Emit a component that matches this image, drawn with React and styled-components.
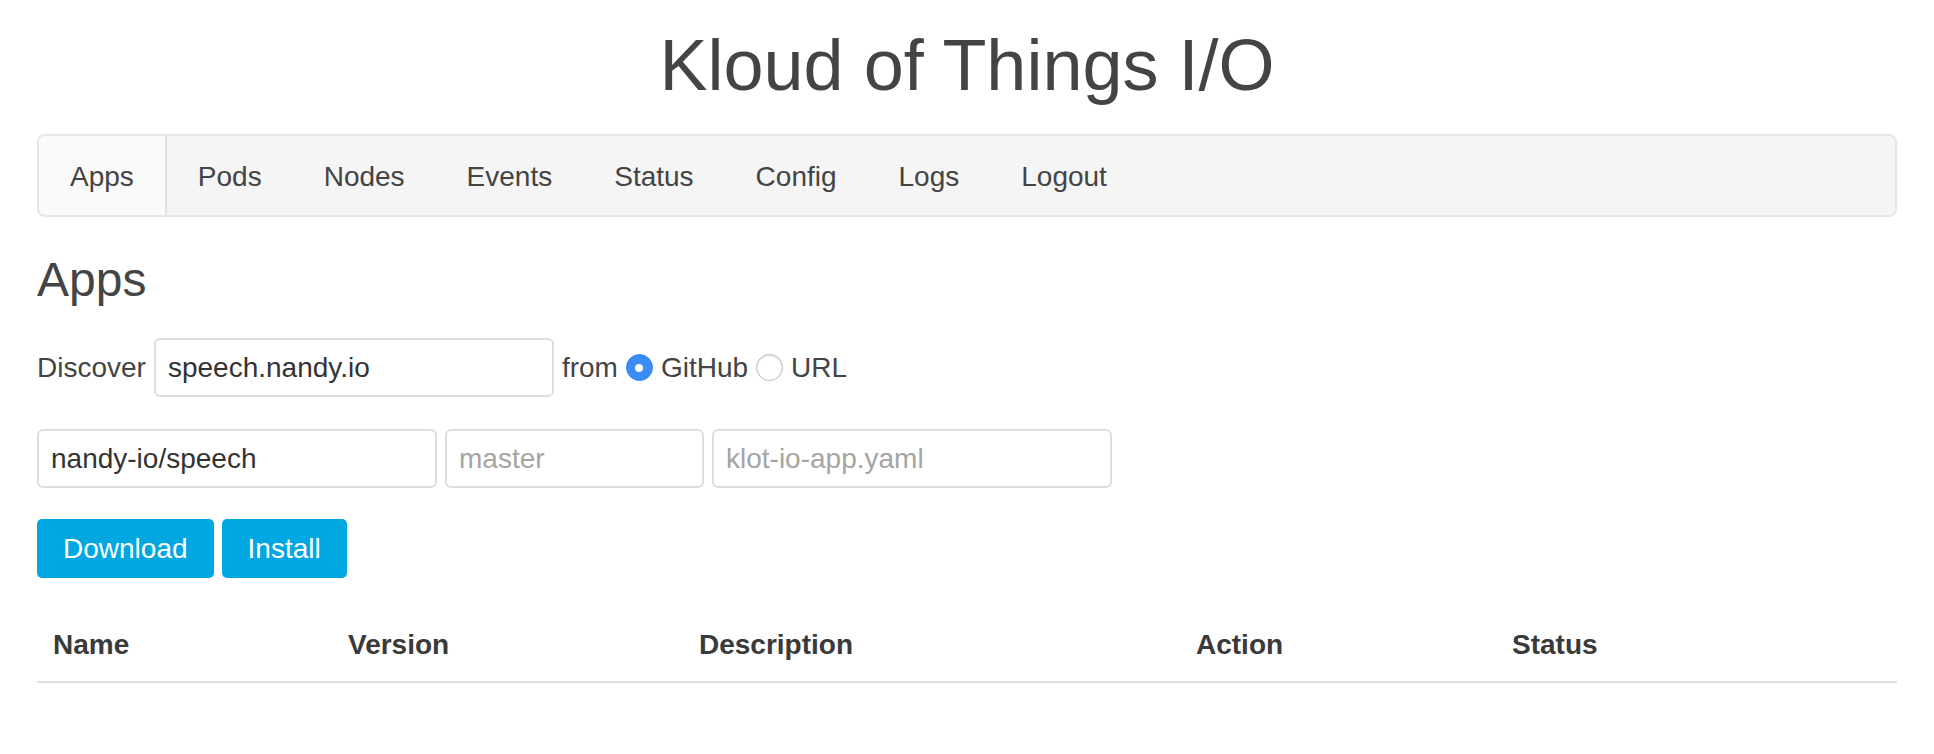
import React from 'react';
import styled, { createGlobalStyle } from 'styled-components';

const GlobalStyle = createGlobalStyle`
    body {
        margin: 0;
        background: #fff;
        color: #333;
        font-family: 'Liberation Sans', Arial, Helvetica, sans-serif;
        font-size: 28px;
    }
`;

const Page = styled.div`
    padding: 0 37px 60px;
`;

const Title = styled.h1`
    color: #444;
    font-size: 72px;
    font-weight: 400;
    line-height: 79px;
    margin: 26px 0 29px;
    text-align: center;
`;

const Nav = styled.nav`
    background: #f5f5f5;
    border: 2px solid #e7e7e7;
    border-radius: 8px;
    display: flex;
    height: 79px;
`;

const NavItem = styled.a`
    align-items: center;
    background: ${p => (p.$active ? '#fafafa' : 'transparent')};
    border-right: ${p => (p.$active ? '2px solid #e2e2e2' : '0')};
    border-radius: ${p => (p.$active ? '6px 0 0 6px' : '0')};
    box-sizing: border-box;
    color: #444;
    display: flex;
    padding: 3px 31px 0;
    text-decoration: none;
`;

const Heading = styled.h3`
    color: #444;
    font-size: 48px;
    font-weight: 400;
    line-height: 53px;
    margin: 36px 0 32px;
`;

const Row = styled.div`
    align-items: center;
    display: flex;
    gap: 8px;
    margin-top: ${p => p.$top || 0}px;
`;

const Label = styled.span`
    color: #444;
`;

const TextInput = styled.input`
    border: 2px solid #ddd;
    border-radius: 6px;
    box-sizing: border-box;
    color: #333;
    font-family: inherit;
    font-size: 28px;
    height: 59px;
    outline: none;
    padding: 0 12px;
    width: ${p => p.$width}px;

    &::placeholder {
        color: #a5a5a5;
    }
`;

const Radio = styled.input`
    appearance: none;
    background: #fff;
    border: 1px solid #b9b9b9;
    border-radius: 50%;
    box-shadow: inset 0 1px 2px rgba(0, 0, 0, 0.12);
    box-sizing: border-box;
    height: 27px;
    margin: 0;
    position: relative;
    width: 27px;

    &:checked {
        background: #3b8cf6;
        border-color: #3483f1;
        box-shadow: none;
    }

    &:checked::after {
        background: #fff;
        border-radius: 50%;
        content: '';
        height: 8px;
        left: 50%;
        position: absolute;
        top: 50%;
        transform: translate(-50%, -50%);
        width: 8px;
    }
`;

const Button = styled.button`
    background: #00a7e1;
    border: 0;
    border-radius: 5px;
    color: #fff;
    font-family: inherit;
    font-size: 28px;
    height: 59px;
    padding: 0 26px;
`;

const Table = styled.table`
    border-collapse: collapse;
    margin-top: 31px;
    table-layout: fixed;
    width: 100%;
`;

const Th = styled.th`
    border-bottom: 2px solid #ddd;
    box-sizing: border-box;
    color: #3a3a3a;
    font-weight: 700;
    line-height: 40px;
    padding: 16px;
    text-align: left;
    width: ${p => (p.$width ? `${p.$width}px` : 'auto')};
`;

const tabs = ['Apps', 'Pods', 'Nodes', 'Events', 'Status', 'Config', 'Logs', 'Logout'];

const columns = [
    { name: 'Name', width: 295 },
    { name: 'Version', width: 351 },
    { name: 'Description', width: 497 },
    { name: 'Action', width: 316 },
    { name: 'Status' },
];

const App = () => {
    return (
        <>
            <GlobalStyle />
            <Page>
                <Title>Kloud of Things I/O</Title>
                <Nav>
                    {tabs.map(tab => (
                        <NavItem key={tab} href="#" $active={tab === 'Apps'}>
                            {tab}
                        </NavItem>
                    ))}
                </Nav>

                <Heading>Apps</Heading>

                <Row>
                    <Label>Discover</Label>
                    <TextInput $width={400} defaultValue="speech.nandy.io" />
                    <Label>from</Label>
                    <Radio type="radio" name="source" defaultChecked />
                    <Label>GitHub</Label>
                    <Radio type="radio" name="source" />
                    <Label>URL</Label>
                </Row>

                <Row $top={32}>
                    <TextInput $width={400} defaultValue="nandy-io/speech" />
                    <TextInput $width={259} placeholder="master" />
                    <TextInput $width={400} placeholder="klot-io-app.yaml" />
                </Row>

                <Row $top={31}>
                    <Button>Download</Button>
                    <Button>Install</Button>
                </Row>

                <Table>
                    <thead>
                        <tr>
                            {columns.map(col => (
                                <Th key={col.name} $width={col.width}>
                                    {col.name}
                                </Th>
                            ))}
                        </tr>
                    </thead>
                    <tbody />
                </Table>
            </Page>
        </>
    );
};

export default App;
